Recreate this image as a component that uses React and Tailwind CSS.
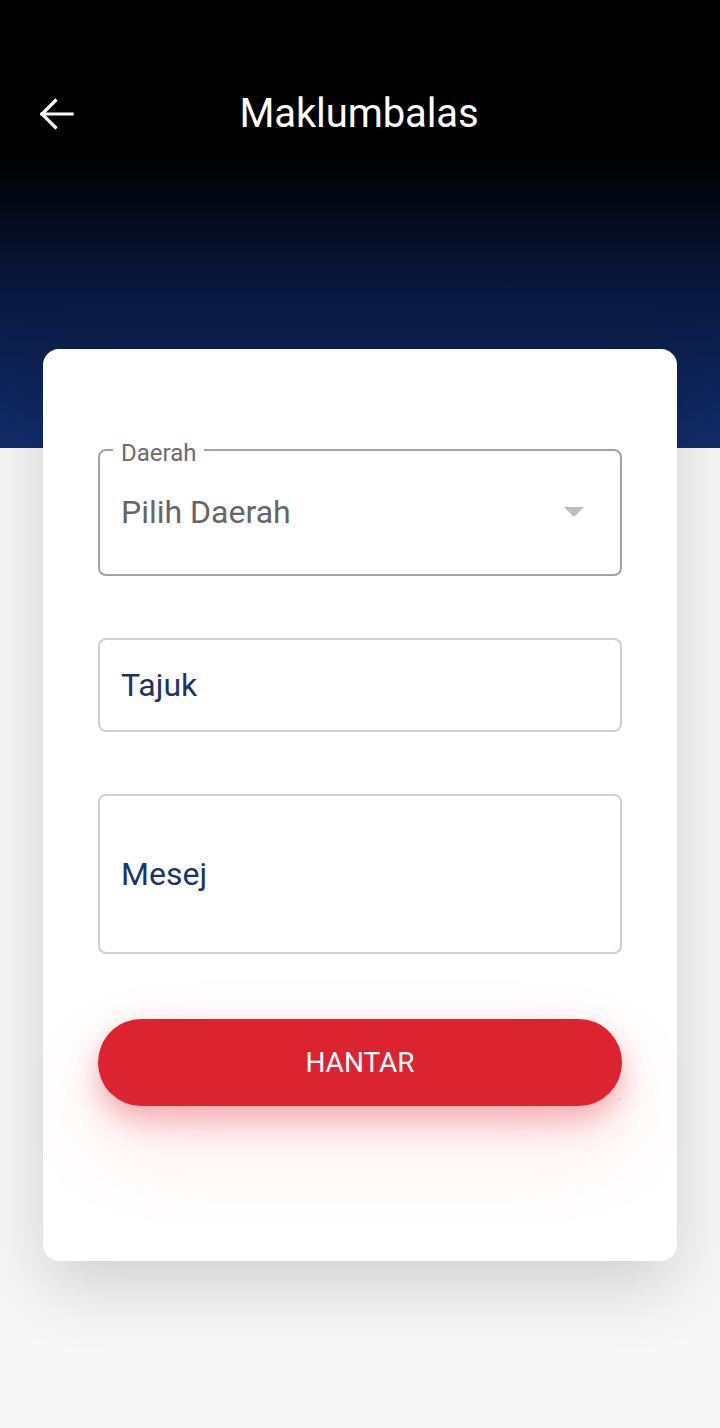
import React from "react";

export default function App() {
  return (
    <div className="min-h-[1428px] w-full bg-[#f7f7f7]" style={{ fontFamily: "Roboto, 'Noto Sans', sans-serif" }}>
      <div className="h-[448px] bg-[linear-gradient(to_bottom,#000000_0%,#000000_36%,#08163a_62%,#122d6c_100%)]">
        <div className="grid h-[56px] grid-cols-[1fr_auto_1fr] items-center pt-[86px] box-content">
          <div className="pl-[39px] flex items-center">
            <svg width="36" height="36" viewBox="0 0 36 36" fill="none" stroke="white" strokeWidth="3.2" strokeLinecap="square">
              <path d="M3 18 H33" />
              <path d="M17.5 3.5 L3 18 L17.5 32.5" strokeLinecap="butt" />
            </svg>
          </div>
          <h1 className="text-[40px] leading-[56px] text-white font-normal tracking-[-0.1px] -ml-[2px]">Maklumbalas</h1>
          <div />
        </div>
      </div>

      <div className="relative mx-[43px] -mt-[99px] rounded-[16px] bg-white px-[55px] pt-[88px] pb-[155px] shadow-[0_24px_70px_rgba(0,0,0,0.16)]">
        <fieldset className="m-0 rounded-[8px] border-2 border-[#a3a3a3] p-0">
          <legend className="ml-[13px] px-[8px] text-[24px] leading-[26px] text-[#6b6b6b]">
            <span className="relative top-[3px]">Daerah</span>
          </legend>
          <div className="flex h-[111px] items-center justify-between pl-[21px] pr-[36px] pb-[14px]">
            <span className="text-[32px] text-[#666666]">Pilih Daerah</span>
            <svg width="20" height="10" viewBox="0 0 20 10">
              <path d="M0 0 H20 L10 10 Z" fill="#bdbdbd" />
            </svg>
          </div>
        </fieldset>

        <div className="mt-[62px] flex h-[94px] items-center rounded-[8px] border-2 border-[#d0d0d0] pl-[21px]">
          <span className="text-[32px] text-[#1b3465]">Tajuk</span>
        </div>

        <div className="mt-[62px] flex h-[160px] items-center rounded-[8px] border-2 border-[#d0d0d0] pl-[21px]">
          <span className="text-[32px] text-[#1b3465]">Mesej</span>
        </div>

        <button className="mt-[65px] flex h-[87px] w-full items-center justify-center rounded-full bg-[#dc2430] text-[28px] text-white shadow-[0_14px_30px_rgba(230,40,55,0.35),0_40px_90px_rgba(240,60,70,0.12)]">
          HANTAR
        </button>
      </div>
    </div>
  );
}
